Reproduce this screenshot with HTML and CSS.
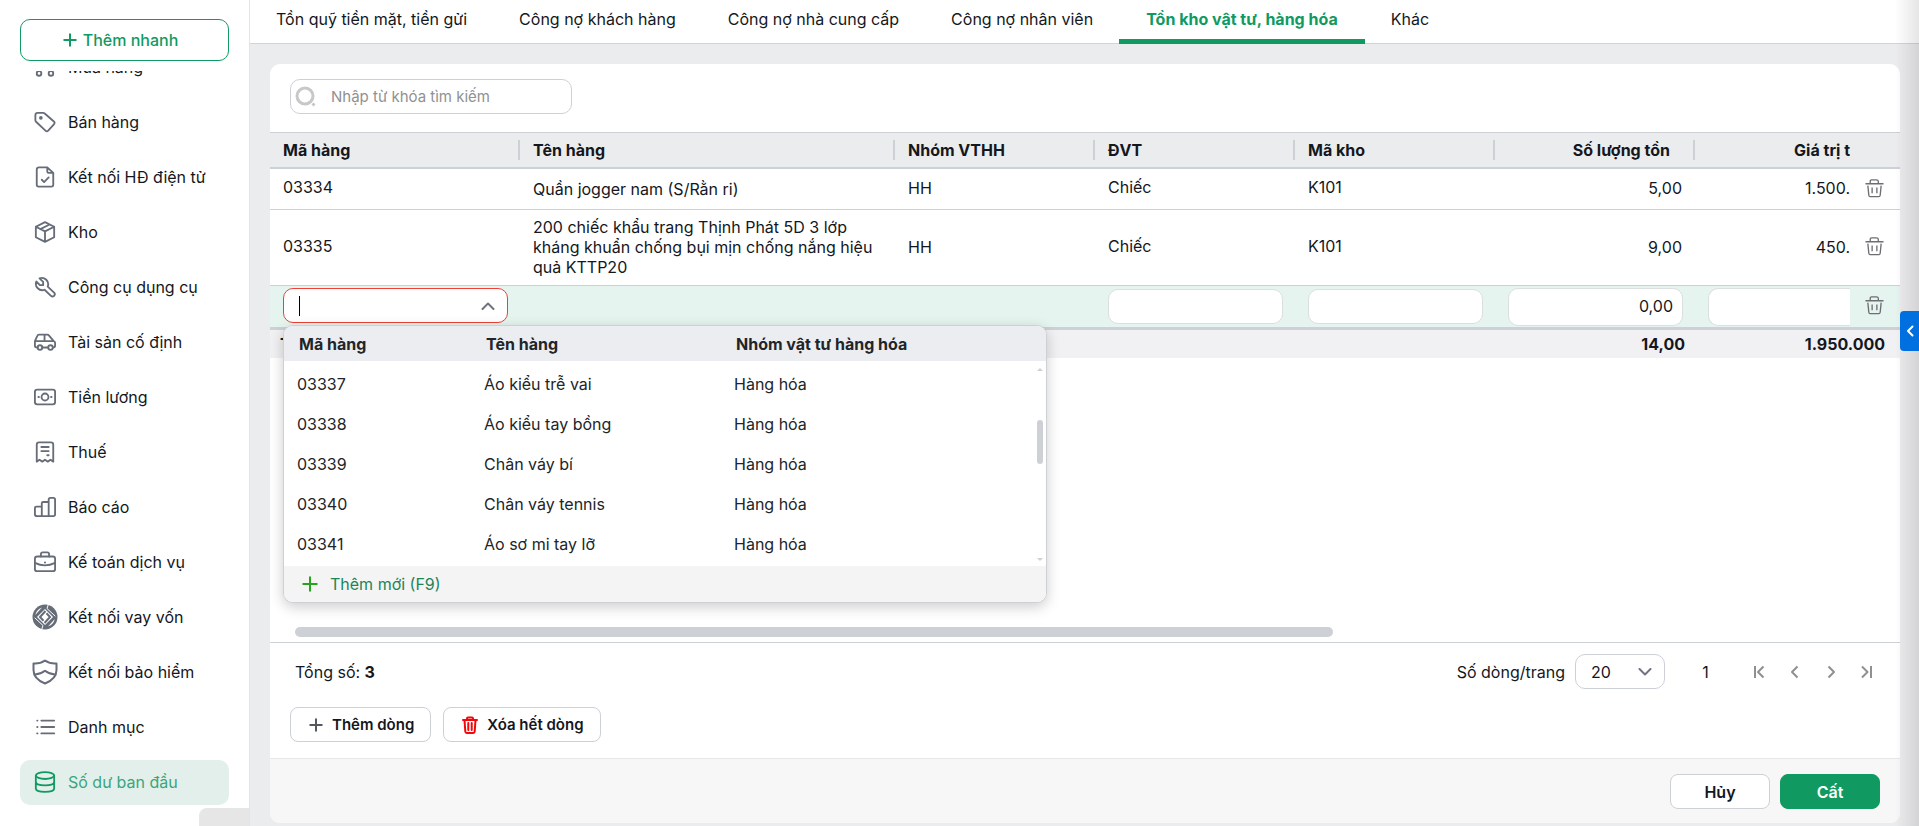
FILE: index.html
```html
<!DOCTYPE html>
<html lang="vi">
<head>
<meta charset="utf-8">
<title>Số dư ban đầu</title>
<link rel="stylesheet" href="styles.css">
</head>
<body>
<svg class="defs" aria-hidden="true">
  <symbol id="trash" viewBox="0 0 20 20"><path d="M0.500 5.500h19M5.500 5V3q0-1.500 1.500-1.500h5Q14 1.500 14 3v2M3 7.500l1 10q.2 1.500 1.500 1.500h9q1.300 0 1.500-1.500l1-10M7.500 9.500v6M12.500 9.500v6"/></symbol>
</svg>
<div class="app">
  <aside class="sidebar">
    <div class="quick"><button class="quick-add" type="button"><svg class="i14" viewBox="0 0 14 14"><path d="M7 0.500v13M0.500 7h13"/></svg>Thêm nhanh</button></div>
    <nav class="menu-clip">
      <ul class="menu">
        <li><a href="#"><svg viewBox="0 0 24 24"><path d="M3 8h18l-1 6"/><circle cx="5.500" cy="19" r="2.500"/><circle cx="18.500" cy="19" r="2.500"/><path d="M4 16.500Q4.500 15 7 15h10q2.500 0 3 1.500"/></svg>Mua hàng</a></li>
        <li><a href="#"><svg viewBox="0 0 24 24"><path d="M1.500 4.500q0-2.500 2.500-2.500H10q1 0 1.700.7l10 8.700q1.600 1.500 0 3.100l-6.200 7q-1.500 1.500-3 0l-10-9.500Q1.500 11 1.500 10z"/><circle cx="7.500" cy="7.500" r="1" fill="currentColor"/></svg>Bán hàng</a></li>
        <li><a href="#"><svg viewBox="0 0 24 24"><path d="M14.500 1.500V6q0 1.500 1.500 1.500h4.500M5.500 1.500h9L21 7.500V20.500q0 2-2 2H5q-2 0-2-2V4q0-2.500 2.500-2.500zM8.500 15l2.500 2.500 5-5"/></svg>Kết nối HĐ điện tử</a></li>
        <li><a href="#"><svg viewBox="0 0 24 24"><path d="M12 1.300l10 5v11.400l-10 5-10-5V6.300zM2 6.300l10 5 10-5M12 11.300v11.400M7 8.800l10-5"/></svg>Kho</a></li>
        <li><a href="#"><svg viewBox="0 0 24 24"><path d="M6.500 10H10V6.500L6 2.500a7 7 0 0 1 9 9l6.900 6.700a2.400 2.400 0 0 1-3.400 3.400L11.500 15a7 7 0 0 1-9-9z"/></svg>Công cụ dụng cụ</a></li>
        <li><a href="#"><svg viewBox="0 0 24 24"><circle cx="6.500" cy="18" r="2.500"/><circle cx="18" cy="18" r="2.500"/><path d="M4 18H3.500Q1 18 1 16V11L3.500 5.500Q4 4 5.500 4h9q1 0 1.700.7L21.500 11q1.500.5 1.500 2v3q0 2-2.500 2M9 18h6.500M1 11h20.500M11.500 4V11"/></svg>Tài sản cố định</a></li>
        <li><a href="#"><svg viewBox="0 0 24 24"><rect x="1" y="4" width="22" height="16" rx="2.500"/><circle cx="12" cy="12" r="3.800"/><path d="M4.800 12h.6M18.600 12h.6"/></svg>Tiền lương</a></li>
        <li><a href="#"><svg viewBox="0 0 24 24"><path d="M3 22.500V4q0-2.500 2.500-2.500h13Q21 1.500 21 4v18.500l-3-2-3 2-3-2-3 2-3-2zM8 6.500h8M8 11h8M14.500 15.500H16"/></svg>Thuế</a></li>
        <li><a href="#"><svg viewBox="0 0 24 24"><path d="M1 13q0-1.500 1.500-1.500h6V22H3.500Q1 22 1 19.500zM8.500 22V8q0-1.500 1.500-1.500h6V22M16 6.500V4q0-2 2-2h3q2 0 2 2v16q0 2-2 2H8.500"/></svg>Báo cáo</a></li>
        <li><a href="#"><svg viewBox="0 0 24 24"><rect x="1" y="6" width="22" height="16" rx="2.500"/><path d="M7.500 6V4q0-2.500 2-2.500h5q2 0 2 2.500v2M1 13q11 5.500 22 0M11.900 12.500h.2"/></svg>Kế toán dịch vụ</a></li>
        <li><a href="#"><svg class="big loan" viewBox="0 0 26 26"><circle class="disc" cx="13" cy="13" r="12.500"/><path class="hole" d="M10 3.500Q4.500 5.500 3.200 11zM16 22.500Q21.500 20.500 22.800 15z"/><path class="gap" d="M16.500 0L15 4.500l8 7.500M9.500 26L11 21.500 3 14"/><path class="hole" d="M13 5l8 8-8 8-8-8z"/><path class="link" d="M13.500 7L8 13l3.500 3.700M12.500 19l5.500-6-3.500-3.700"/></svg>Kết nối vay vốn</a></li>
        <li><a href="#"><svg class="big" viewBox="0 0 26 26"><path d="M13 1.500Q18 5 24.500 4.500V11q0 9-11.500 13.500Q1.500 20 1.500 11V4.500Q8 5 13 1.500zM3 15.500q6-.5 10-3.700 4 3.200 10 3.700"/></svg>Kết nối bảo hiểm</a></li>
        <li><a href="#"><svg viewBox="0 0 24 24"><path d="M8 5h14M8 12h14M8 19h14M3.500 5h.3M3.500 12h.3M3.500 19h.3"/></svg>Danh mục</a></li>
        <li><a href="#" class="active" aria-current="page"><svg viewBox="0 0 24 24"><ellipse cx="12" cy="5" rx="10" ry="3.700"/><path d="M2 5v14q0 3.700 10 3.700T22 19V5M2 12q0 3.700 10 3.700T22 12"/></svg>Số dư ban đầu</a></li>
      </ul>
    </nav>
    <div class="collapse-tab"></div>
  </aside>
  <main class="main">
    <nav class="tabs">
      <a href="#">Tồn quỹ tiền mặt, tiền gửi</a>
      <a href="#">Công nợ khách hàng</a>
      <a href="#">Công nợ nhà cung cấp</a>
      <a href="#">Công nợ nhân viên</a>
      <a href="#" class="current">Tồn kho vật tư, hàng hóa</a>
      <a href="#">Khác</a>
    </nav>
    <section class="card">
      <div class="toolbar">
        <label class="search"><svg viewBox="0 0 22 22"><circle cx="10" cy="10" r="8"/><path d="M17.500 17.500l2 2"/></svg><input type="text" placeholder="Nhập từ khóa tìm kiếm" aria-label="Tìm kiếm"></label>
      </div>
      <div class="grid">
        <table class="stock">
          <colgroup><col class="c-code"><col class="c-name"><col class="c-std"><col class="c-std"><col class="c-std"><col class="c-std"><col><col class="c-act"></colgroup>
          <thead>
            <tr><th>Mã hàng</th><th>Tên hàng</th><th>Nhóm VTHH</th><th>ĐVT</th><th>Mã kho</th><th class="num head-num">Số lượng tồn</th><th class="cut">Giá trị t</th><th></th></tr>
          </thead>
          <tbody>
            <tr><td class="code">03334</td><td class="name">Quần jogger nam (S/Rằn ri)</td><td>HH</td><td class="code">Chiếc</td><td class="code">K101</td><td class="num">5,00</td><td class="cut">1.500.</td><td class="act"><button type="button" aria-label="Xóa dòng"><svg><use href="#trash"/></svg></button></td></tr>
            <tr><td class="code">03335</td><td class="name">200 chiếc khẩu trang Thịnh Phát 5D 3 lớp kháng khuẩn chống bụi mịn chống nắng hiệu quả KTTP20</td><td>HH</td><td class="code">Chiếc</td><td class="code">K101</td><td class="num">9,00</td><td class="cut">450.</td><td class="act"><button type="button" aria-label="Xóa dòng"><svg><use href="#trash"/></svg></button></td></tr>
            <tr class="editing">
              <td class="field"><div class="combo"><span class="caret"></span><input type="text" aria-label="Mã hàng"><svg viewBox="0 0 14 8"><path d="M1.500 7L7 1.500 12.500 7"/></svg></div></td>
              <td></td><td></td>
              <td class="field"><input class="box" type="text" aria-label="ĐVT"></td>
              <td class="field"><input class="box" type="text" aria-label="Mã kho"></td>
              <td class="field"><input class="box tall" type="text" value="0,00" aria-label="Số lượng tồn"></td>
              <td class="field cut-field"><input class="box tall open" type="text" aria-label="Giá trị tồn"></td>
              <td class="act"><button type="button" aria-label="Xóa dòng"><svg><use href="#trash"/></svg></button></td>
            </tr>
          </tbody>
          <tfoot>
            <tr><td class="sum-label">Tổng</td><td></td><td></td><td></td><td></td><td class="num">14,00</td><td class="num total" colspan="2">1.950.000</td></tr>
          </tfoot>
        </table>
        <div class="dropdown">
          <table class="options">
            <colgroup><col class="o-code"><col class="o-name"><col></colgroup>
            <thead><tr><th>Mã hàng</th><th>Tên hàng</th><th>Nhóm vật tư hàng hóa</th></tr></thead>
            <tbody>
              <tr><td>03337</td><td>Áo kiểu trễ vai</td><td>Hàng hóa</td></tr>
              <tr><td>03338</td><td>Áo kiểu tay bồng</td><td>Hàng hóa</td></tr>
              <tr><td>03339</td><td>Chân váy bí</td><td>Hàng hóa</td></tr>
              <tr><td>03340</td><td>Chân váy tennis</td><td>Hàng hóa</td></tr>
              <tr><td>03341</td><td>Áo sơ mi tay lỡ</td><td>Hàng hóa</td></tr>
            </tbody>
          </table>
          <div class="scroll-v"><i class="up"></i><i class="thumb"></i><i class="down"></i></div>
          <button class="add-new" type="button"><svg viewBox="0 0 16 16"><path d="M8 0.500v15M0.500 8h15"/></svg>Thêm mới (F9)</button>
        </div>
        <div class="scroll-h"><i></i></div>
      </div>
      <div class="pager">
        <span>Tổng số: <b>3</b></span>
        <div class="pager-right">
          <label for="size">Số dòng/trang</label>
          <span class="select"><select id="size"><option>20</option></select><svg viewBox="0 0 14 8"><path d="M1.500 1L7 6.500 12.500 1"/></svg></span>
          <span class="page">1</span>
          <div class="steps">
            <button type="button" aria-label="Trang đầu"><svg viewBox="0 0 14 14"><path d="M3 1v12M11.500 1.500L6 7l5.500 5.500"/></svg></button>
            <button type="button" aria-label="Trang trước"><svg viewBox="0 0 14 14"><path d="M9.500 1.500L4 7l5.500 5.500"/></svg></button>
            <button type="button" aria-label="Trang sau"><svg viewBox="0 0 14 14"><path d="M4.500 1.500L10 7l-5.500 5.500"/></svg></button>
            <button type="button" aria-label="Trang cuối"><svg viewBox="0 0 14 14"><path d="M2 1.500L7.500 7 2 12.500M11 1v12"/></svg></button>
          </div>
        </div>
      </div>
      <div class="row-actions">
        <button class="btn" type="button"><svg class="i14 plus" viewBox="0 0 14 14"><path d="M7 0.500v13M0.500 7h13"/></svg>Thêm dòng</button>
        <button class="btn" type="button"><svg class="bin" viewBox="0 0 16 18"><path d="M1 4h14M5 4V2.500Q5 1.500 6 1.500h4q1 0 1 1V4M2.500 4l.8 11.500q.1 1.500 1.500 1.500h6.400q1.400 0 1.500-1.500L13.500 4M6.300 7v7M9.700 7v7"/></svg>Xóa hết dòng</button>
      </div>
      <footer class="form-actions">
        <button class="btn wide" type="button">Hủy</button>
        <button class="btn wide primary" type="button">Cất</button>
      </footer>
    </section>
    <div class="edge-shade"></div>
    <button class="edge-toggle" type="button" aria-label="Mở bảng bên"><svg viewBox="0 0 8 12"><path d="M6.500 1.500L2 6l4.500 4.500"/></svg></button>
  </main>
</div>
</body>
</html>
```

FILE: styles.css
```css
* { box-sizing: border-box; }
body { margin: 0; font: 16px/20px Inter, "Noto Sans", sans-serif; color: #14171d; background: #ebecee; }
button, input, select { font: inherit; color: inherit; margin: 0; padding: 0; border: 0; background: none; outline: 0; }
a { color: inherit; text-decoration: none; }
ul { margin: 0; padding: 0; list-style: none; }
svg { fill: none; stroke: currentColor; stroke-width: 2; stroke-linecap: round; stroke-linejoin: round; flex: none; display: block; }
.defs { position: absolute; width: 0; height: 0; }
.app { display: flex; height: 100vh; overflow: hidden; }

.sidebar { position: relative; width: 250px; flex: none; display: flex; flex-direction: column; background: #fff; border-right: 1px solid #e3e4e8; }
.quick { padding: 19px 20px 10px; }
.quick-add { width: 100%; height: 42px; display: flex; align-items: center; justify-content: center; gap: 6px; border: 1px solid #109a62; border-radius: 10px; color: #109a62; padding-right: 8px; font-weight: 500; }
.i14 { width: 14px; height: 14px; stroke-linecap: butt; }
.menu-clip { flex: 1; min-height: 0; overflow: hidden; display: flex; flex-direction: column; justify-content: flex-end; padding: 0 20px 21px; }
.menu { display: flex; flex-direction: column; gap: 10px; }
.menu a { display: flex; align-items: center; height: 45px; padding: 0 0 2px 12px; gap: 10px; border-radius: 10px; }
.menu svg { width: 22px; height: 22px; margin: 0 2px; color: #666c78; stroke-width: 2; }
.menu svg.big { width: 26px; height: 26px; margin: 0; }
.loan .disc { fill: currentColor; stroke: none; }
.loan .hole { fill: #fff; stroke: none; }
.loan .gap { stroke: #fff; stroke-width: 1; }
.loan .link { stroke-width: 2; stroke-linecap: butt; stroke-linejoin: miter; }
.menu .active { background: #e2efea; color: #3aa67c; }
.menu .active svg { color: #109a62; }
.collapse-tab { position: absolute; right: 0; bottom: 0; width: 50px; height: 18px; border-radius: 8px 0 0 0; background: #e6e6e6; }

.main { position: relative; flex: 1; min-width: 0; display: flex; flex-direction: column; }
.tabs { display: flex; height: 44px; flex: none; background: #fff; border-bottom: 1px solid #d1d5d9; }
.tabs a { height: 44px; padding: 9px 26px 0; white-space: nowrap; border-bottom: 5px solid transparent; }
.tabs .current { padding: 9px 27px 0; color: #109a62; font-weight: 700; border-color: #109a62; }
.card { flex: 1; min-height: 0; margin: 20px 19px 3px 20px; display: flex; flex-direction: column; background: #fff; border-radius: 10px; overflow: hidden; }
.toolbar { padding: 15px 20px 18px; }
.search { display: flex; align-items: center; width: 282px; height: 35px; padding-left: 4px; gap: 14px; border: 1px solid #cdd0d5; border-radius: 10px; }
.search svg { width: 22px; height: 22px; color: #c8c8c8; stroke-width: 3; stroke-linecap: butt; }
.search input { flex: 1; min-width: 0; font-size: 15px; }
.search input::placeholder { color: #919191; opacity: 1; }

.grid { position: relative; flex: 1; min-height: 0; border-bottom: 1px solid #cdd0d5; }
table { border-collapse: separate; border-spacing: 0; table-layout: fixed; width: 100%; }
.c-code { width: 250px; } .c-name { width: 375px; } .c-std { width: 200px; } .c-act { width: 50px; }
th, td { text-align: left; padding: 0 13px; }
.stock th { position: relative; height: 37px; background: #ebecee; border-top: 1px solid #cdd0d5; border-bottom: 2px solid #cdd0d5; font-weight: 700; }
.stock th:nth-child(-n+6)::after { content: ""; position: absolute; right: 0; top: 7px; width: 2px; height: 20px; background: #cdd0d5; }
.stock tbody td { height: 41px; padding-bottom: 2px; border-bottom: 1px solid #cdd0d5; }
.stock tbody .code { padding-bottom: 4px; }
.stock tbody .name { padding: 7px 10px 8px 13px; }
.stock .num, .stock .cut { text-align: right; }
.stock .head-num { padding-right: 25px; }
.stock .cut { padding-right: 0; }
.stock tbody .act { padding: 0 0 3px 15px; }
.act button { display: block; color: #6e6e72; }
.act svg { width: 19px; height: 20px; stroke-width: 1.4; stroke-linecap: butt; }
.stock .editing td { background: #e5f4ef; height: 44px; border-bottom: 3px solid #cdd0d5; }
.stock .editing .field { padding: 1px 12px 1px 13px; }
.stock .editing .cut-field { padding-right: 0; }
.combo { display: flex; align-items: center; height: 35px; padding: 0 12px 0 15px; background: #fff; border: 1px solid #ee4036; border-radius: 10px; margin-bottom: 2px; }
.caret { width: 1px; height: 20px; background: #000; }
.combo input { flex: 1; min-width: 0; }
.combo svg { width: 14px; height: 8px; color: #6f7480; }
.box { display: block; width: 100%; height: 35px; padding: 0 9px; background: #fff; border: 1px solid #dcdfe0; border-radius: 10px; }
.box.tall { height: 38px; text-align: right; padding-bottom: 2px; }
.box.open { border-right: 0; border-radius: 10px 0 0 10px; }
.stock tfoot td { height: 28px; background: #f1f1f3; font-weight: 700; padding-right: 10px; }
.stock tfoot .sum-label { padding-left: 10px; }
.stock tfoot .total { padding-right: 15px; }

.dropdown { position: absolute; left: 13px; top: 193px; width: 764px; height: 278px; display: flex; flex-direction: column; border: 1px solid #cdd0d5; border-radius: 10px; background: #fff; overflow: hidden; box-shadow: 0 4px 14px rgba(0, 0, 0, .2); }
.o-code { width: 187px; } .o-name { width: 250px; }
.options th { height: 35px; padding: 0 15px; background: #ecedf1; color: #212529; font-weight: 700; }
.options td { height: 40px; padding-bottom: 2px; color: #212529; }
.options tbody tr:first-child td { height: 44px; padding-top: 4px; }
.scroll-v { position: absolute; right: 3px; top: 42px; height: 193px; width: 6px; display: flex; flex-direction: column; justify-content: space-between; }
.scroll-v .up { border: 3px solid transparent; border-top: 0; border-bottom-color: #cdd0d5; }
.scroll-v .thumb { height: 44px; border-radius: 3px; background: #cdd0d5; margin-bottom: 46px; }
.scroll-v .down { border: 3px solid transparent; border-bottom: 0; border-top-color: #cdd0d5; }
.add-new { margin-top: auto; height: 36px; display: flex; align-items: center; gap: 12px; padding-left: 18px; background: #f4f4f4; color: #1c855a; }
.add-new svg { width: 16px; height: 16px; color: #28a41c; stroke-linecap: butt; }
.scroll-h { position: absolute; left: 25px; right: 20px; bottom: 5px; height: 10px; }
.scroll-h i { display: block; width: 65.5%; height: 10px; border-radius: 5px; background: #cdd0d5; }

.pager { display: flex; align-items: center; justify-content: space-between; padding: 11px 26px 11px 25px; height: 57px; }
.pager-right { display: flex; align-items: center; }
.select { position: relative; display: flex; align-items: center; margin-left: 10px; }
.select select { appearance: none; width: 90px; height: 35px; padding-left: 15px; border: 1px solid #cdd0d5; border-radius: 10px; }
.select svg { position: absolute; right: 13px; width: 14px; height: 8px; color: #6f7480; pointer-events: none; }
.page { width: 81px; margin-right: 6px; text-align: center; }
.steps { display: flex; gap: 22px; }
.steps button { color: #8f9092; }
.steps svg { width: 14px; height: 14px; stroke-linecap: butt; }
.row-actions { display: flex; gap: 12px; padding: 7px 20px 16px; }
.btn { display: flex; align-items: center; justify-content: center; gap: 9px; height: 35px; padding: 0 16px 0 18px; border: 1px solid #cdd0d5; border-radius: 8px; background: #fff; font-size: 15px; font-weight: 600; }
.plus { color: #55585e; }
.bin { width: 16px; height: 18px; color: #f2070b; }
.form-actions { display: flex; justify-content: flex-end; gap: 10px; padding: 15px 20px 14px; border-top: 1px solid #e6e7e9; background: #f7f7f7; }
.wide { width: 100px; padding: 0; font-size: 16px; }
.primary { background: #109a62; border-color: #109a62; color: #fff; }
.edge-shade { position: absolute; right: 0; top: 0; bottom: 0; width: 24px; background: linear-gradient(90deg, rgba(0, 0, 0, 0), rgba(0, 0, 0, .1)); pointer-events: none; }
.edge-toggle { position: absolute; right: 0; top: 311px; width: 19px; height: 40px; padding-left: 6px; border-radius: 4px 0 0 4px; background: #0070e0; color: #fff; }
.edge-toggle svg { width: 8px; height: 12px; }
```
